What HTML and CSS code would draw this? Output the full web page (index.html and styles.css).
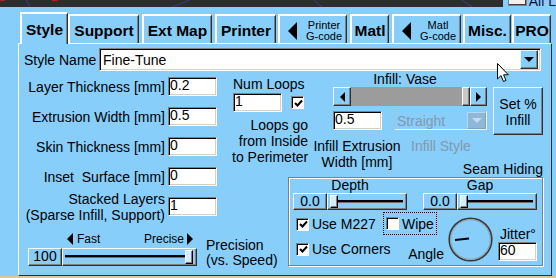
FILE: index.html
```html
<!DOCTYPE html>
<html lang="en">
<head>
  <meta charset="UTF-8">
  <title>Style settings</title>
  <link rel="stylesheet" href="styles.css">
</head>
<body>
  <div class="topbar">
    <div class="view3d">
      <svg width="503" height="7" viewBox="0 0 503 7">
        <line x1="0" y1="1" x2="5" y2="0" stroke="#d02020" stroke-width="1"/>
        <line x1="52" y1="1" x2="58" y2="0" stroke="#d02020" stroke-width="1"/>
        <line x1="26" y1="0" x2="30" y2="7" stroke="#3c3c96" stroke-width="1"/>
        <line x1="172" y1="7" x2="190" y2="0" stroke="#3c3c96" stroke-width="1"/>
        <line x1="314" y1="0" x2="322" y2="7" stroke="#3c3c96" stroke-width="1"/>
        <line x1="462" y1="0" x2="472" y2="7" stroke="#3c3c96" stroke-width="1"/>
      </svg>
    </div>
    <span class="allbox"></span>
    <span class="alltext">All L</span>
  </div>

  <div class="tabs">
    <div class="tab tab-style active">Style</div>
    <div class="tab tab-support">Support</div>
    <div class="tab tab-ext">Ext Map</div>
    <div class="tab tab-printer">Printer</div>
    <div class="tab tab-small"><span class="tri-tab"></span><span class="small-label">Printer<br>G-code</span></div>
    <div class="tab tab-matl">Matl</div>
    <div class="tab tab-small tab-mg"><span class="tri-tab"></span><span class="small-label">Matl<br>G-code</span></div>
    <div class="tab tab-misc">Misc.</div>
    <div class="tab tab-pro">PRO</div>
  </div>

  <div class="panel">
    <div class="name-row">
      <span class="name-label">Style Name</span>
      <div class="combo name-combo">
        <span class="combo-text">Fine-Tune</span>
        <span class="drop"><span class="arrow-down"></span></span>
      </div>
    </div>

    <div class="main">
      <div class="left-col">
        <div class="form-grid">
          <span class="lbl">Layer Thickness [mm]</span><span class="field">0.2</span>
          <span class="lbl">Extrusion Width [mm]</span><span class="field">0.5</span>
          <span class="lbl">Skin Thickness [mm]</span><span class="field">0</span>
          <span class="lbl">Inset&nbsp; Surface [mm]</span><span class="field">0</span>
          <span class="lbl">Stacked Layers<br>(Sparse Infill, Support)</span><span class="field">1</span>
        </div>

        <div class="precision">
          <div class="prec-slider">
            <div class="scale">
              <span><i class="tri-l"></i>Fast</span>
              <span>Precise<i class="tri-r"></i></span>
            </div>
            <div class="slider slider-wide">
              <span class="val">100</span>
              <span class="track"><span class="groove"></span><span class="thumb"></span></span>
            </div>
          </div>
          <div class="prec-label">Precision<br>(vs. Speed)</div>
        </div>
      </div>

      <div class="right-col">
        <div class="upper">
          <div class="loops">
            <div class="loops-title">Num Loops</div>
            <div class="loops-row">
              <span class="field loops-field">1</span>
              <span class="cb checked"><svg width="9" height="9" viewBox="0 0 9 9"><path d="M1 4 L3.5 6.5 L8 1.5" fill="none" stroke="#000" stroke-width="2"/></svg></span>
            </div>
            <div class="loops-text">Loops go<br>from Inside<br>to Perimeter</div>
          </div>

          <div class="infill">
            <div class="infill-title">Infill: Vase</div>
            <div class="scrollbar">
              <span class="sb-btn"><i class="sb-l"></i></span>
              <span class="sb-track"></span>
              <span class="sb-thumb"></span>
              <span class="sb-btn"><i class="sb-r"></i></span>
            </div>
            <div class="infill-row">
              <span class="field">0.5</span>
              <div class="combo style-combo">
                <span class="combo-text">Straight</span>
                <span class="drop"><span class="arrow-down"></span></span>
              </div>
            </div>
            <div class="infill-labels">
              <span class="ie-label">Infill Extrusion<br>Width [mm]</span>
              <span class="is-label">Infill Style</span>
            </div>
          </div>

          <div class="set-btn">Set %<br>Infill</div>
        </div>

        <div class="seam-title">Seam Hiding</div>
        <div class="seam">
          <div class="seam-sliders">
            <div class="seam-col">
              <div class="seam-lbl">Depth</div>
              <div class="slider">
                <span class="val">0.0</span>
                <span class="track"><span class="groove"></span><span class="thumb"></span></span>
              </div>
            </div>
            <div class="seam-col">
              <div class="seam-lbl">Gap</div>
              <div class="slider">
                <span class="val">0.0</span>
                <span class="track"><span class="groove"></span><span class="thumb"></span></span>
              </div>
            </div>
          </div>

          <div class="seam-grid">
            <label class="check m227"><span class="cb checked"><svg width="9" height="9" viewBox="0 0 9 9"><path d="M1 4 L3.5 6.5 L8 1.5" fill="none" stroke="#000" stroke-width="2"/></svg></span>Use M227</label>
            <label class="check wipe"><span class="cb"></span>Wipe</label>
            <label class="check corners"><span class="cb checked"><svg width="9" height="9" viewBox="0 0 9 9"><path d="M1 4 L3.5 6.5 L8 1.5" fill="none" stroke="#000" stroke-width="2"/></svg></span>Use Corners</label>
            <span class="angle">Angle</span>
            <div class="dial">
              <svg width="45" height="45" viewBox="0 0 45 45">
                <circle cx="22.5" cy="22.5" r="21.3" fill="none" stroke="#3a3a3a" stroke-width="1.6"/>
                <circle cx="22.5" cy="22.5" r="19.8" fill="none" stroke="#9a9a9a" stroke-width="1"/>
                <line x1="7" y1="23" x2="21" y2="21.5" stroke="#000" stroke-width="2"/>
              </svg>
            </div>
            <div class="jitter">
              <span class="jitter-lbl">Jitter°</span>
              <span class="field jitter-field">60</span>
            </div>
          </div>
        </div>
      </div>
    </div>
  </div>
  <div class="status"></div>

  <div class="cursor">
    <svg width="13" height="20" viewBox="0 0 13 20">
      <path d="M0.5 0.5 L0.5 16 L4 12.6 L6.5 18.5 L9 17.4 L6.6 11.8 L11.3 11.8 Z" fill="#fff" stroke="#000" stroke-width="1"/>
    </svg>
  </div>
</body>
</html>
```

FILE: styles.css
```css
body {
  margin: 0;
  width: 556px;
  height: 278px;
  overflow: hidden;
  position: relative;
  background: #87cefa;
  font-family: "Liberation Sans", Arial, sans-serif;
  font-size: 14px;
  line-height: 16px;
  color: #000;
}

/* strip of the 3d view above the page control */
.topbar {
  display: flex;
  height: 7px;
}
.view3d {
  width: 503px;
  height: 7px;
  background: #2d2d2d;
}
.view3d svg {
  display: block;
}
.allbox {
  box-sizing: border-box;
  width: 20px;
  height: 6px;
  margin-left: 5px;
  background: #f0f0f0;
  border: 1px solid #808080;
  border-top: none;
  box-shadow: inset -1px -1px #404040;
}
.alltext {
  margin-left: 2px;
  margin-top: -6px;
  line-height: 14px;
  color: #101048;
  white-space: nowrap;
}

/* tabs */
.tabs {
  display: flex;
  align-items: flex-end;
  height: 36px;
  padding-left: 20px;
}
.tab {
  box-sizing: border-box;
  height: 29px;
  margin-right: 3px;
  display: flex;
  align-items: center;
  justify-content: center;
  font-weight: bold;
  font-size: 15.5px;
  padding-top: 2px;
  border-left: 2px solid #fff;
  border-top: 2px solid #fff;
  border-right: 1px solid #303030;
  box-shadow: inset -1px 0 #808080;
  white-space: nowrap;
}
.tab.active {
  height: 32px;
  margin-bottom: -1px;
  margin-right: 0;
  z-index: 1;
  background: #87cefa;
  padding-bottom: 1px;
}
.tab-style { width: 48px; }
.tab-support { width: 71px; }
.tab-ext { width: 70px; }
.tab-printer { width: 61px; margin-right: 2px; }
.tab-small {
  width: 69px;
  justify-content: flex-start;
  padding-left: 8px;
}
.tab-matl { width: 39px; }
.tab-mg { margin-right: 2px; }
.tab-misc { width: 48px; margin-right: 1px; }
.tab-pro { width: 39px; margin-right: 0; }
.tri-tab {
  flex: none;
  width: 0;
  height: 0;
  border-right: 9px solid #000;
  border-top: 9.5px solid transparent;
  border-bottom: 9.5px solid transparent;
}
.small-label {
  width: 38px;
  margin-left: 8px;
  text-align: center;
  font-weight: normal;
  font-size: 11px;
  line-height: 11px;
}

/* main panel */
.panel {
  box-sizing: border-box;
  margin-left: 18px;
  width: 534px;
  height: 233px;
  border: 1px solid;
  border-color: #fff #303030 #303030 #fff;
}
.status {
  height: 2px;
  background: #d8c89c;
}

.name-row {
  display: flex;
  align-items: center;
  padding: 4px 0 0 5px;
}
.name-label {
  width: 75px;
}

.field {
  box-sizing: border-box;
  display: block;
  width: 49px;
  height: 19px;
  padding-left: 1px;
  line-height: 15px;
  background: #fff;
  border: 1px solid;
  border-color: #808080 #fff #fff #808080;
  box-shadow: inset 1px 1px #000, inset -1px -1px #d4d0c8;
  white-space: nowrap;
}

.combo {
  box-sizing: border-box;
  display: flex;
  align-items: center;
  border: 1px solid;
  border-color: #808080 #fff #fff #808080;
  box-shadow: inset 1px 1px #000, inset -1px -1px #d4d0c8;
  padding: 2px;
}
.name-combo {
  width: 442px;
  height: 23px;
  background: #fff;
}
.combo-text {
  flex: 1;
  padding-left: 1px;
}
.drop {
  box-sizing: border-box;
  width: 18px;
  height: 19px;
  display: flex;
  align-items: center;
  justify-content: center;
  background: #87cefa;
  border: 1px solid;
  border-color: #e8f6ff #303030 #303030 #e8f6ff;
  box-shadow: inset -1px -1px #808080;
}
.arrow-down {
  width: 0;
  height: 0;
  border-top: 5px solid #000;
  border-left: 5px solid transparent;
  border-right: 5px solid transparent;
}

.main {
  display: flex;
}

/* left column */
.left-col {
  width: 203px;
  padding-top: 6px;
}
.form-grid {
  display: grid;
  grid-template-columns: 146px 49px;
  grid-auto-rows: 19px;
  column-gap: 3px;
  row-gap: 11px;
  align-items: center;
}
.lbl {
  text-align: right;
  white-space: nowrap;
}

.precision {
  display: flex;
  margin-top: 16px;
}
.prec-slider {
  margin-left: 9px;
  width: 169px;
}
.scale {
  display: flex;
  justify-content: space-between;
  padding: 0 4px 0 39px;
  font-size: 12px;
  line-height: 14px;
}
.scale span {
  display: flex;
  align-items: center;
}
.tri-l, .tri-r {
  width: 0;
  height: 0;
  border-top: 6px solid transparent;
  border-bottom: 6px solid transparent;
}
.tri-l {
  border-right: 6px solid #000;
  margin-right: 4px;
}
.tri-r {
  border-left: 6px solid #000;
  margin-left: 3px;
}
.prec-label {
  margin-left: 9px;
  margin-top: 6px;
  line-height: 15px;
  white-space: nowrap;
}

/* trackbars */
.slider {
  display: flex;
  height: 17px;
}
.slider-wide {
  height: 18px;
  margin-top: 2px;
}
.val, .track, .set-btn, .sb-btn, .sb-thumb {
  box-sizing: border-box;
  border: 1px solid;
  border-color: #f4fbff #303030 #303030 #f4fbff;
  box-shadow: inset -1px -1px #808080;
}
.val {
  width: 34px;
  text-align: center;
  line-height: 15px;
}
.track {
  position: relative;
  width: 80px;
}
.slider-wide .track {
  width: 135px;
}
.groove {
  position: absolute;
  left: 2px;
  right: 3px;
  top: 6px;
  height: 2px;
  background: #000;
  box-shadow: 0 1px #707070;
}
.thumb {
  position: absolute;
  top: 1px;
  left: 2px;
  box-sizing: border-box;
  width: 8px;
  height: 13px;
  background: #d4ecfb;
  border: 1px solid;
  border-color: #fff #000 #000 #fff;
  box-shadow: inset -1px -1px #808080;
}
.slider-wide .thumb {
  left: auto;
  right: 3px;
  height: 14px;
}

/* right side */
.right-col {
  flex: 1;
}
.upper {
  display: flex;
  height: 90px;
}
.loops {
  width: 76px;
  margin-left: 10px;
  padding-top: 5px;
}
.loops-title {
  padding-left: 1px;
  white-space: nowrap;
}
.loops-row {
  display: flex;
  align-items: center;
  margin-top: 1px;
}
.loops-field {
  margin-left: 1px;
}
.loops-row .cb {
  margin-left: 9px;
}
.loops-text {
  margin-top: 5px;
  text-align: right;
  white-space: nowrap;
}

.cb {
  box-sizing: border-box;
  display: inline-flex;
  align-items: center;
  justify-content: center;
  width: 13px;
  height: 13px;
  flex: none;
  background: #fff;
  border: 1px solid;
  border-color: #808080 #fff #fff #808080;
  box-shadow: inset 1px 1px #000;
}
.cb svg {
  display: block;
  margin: 1px 0 0 1px;
}

.infill {
  width: 154px;
  margin-left: 25px;
}
.infill-title {
  text-align: center;
  padding-right: 10px;
  white-space: nowrap;
}
.scrollbar {
  display: flex;
  height: 19px;
}
.sb-btn {
  width: 18px;
  display: flex;
  align-items: center;
  justify-content: center;
  background: #87cefa;
}
.sb-btn:last-child {
  width: 17px;
}
.sb-l, .sb-r {
  width: 0;
  height: 0;
  border-top: 5px solid transparent;
  border-bottom: 5px solid transparent;
}
.sb-l {
  border-right: 5px solid #000;
}
.sb-r {
  border-left: 5px solid #000;
}
.sb-track {
  flex: 1;
  background: #9c9c9c;
}
.sb-thumb {
  width: 8px;
  background: #c8c8c8;
}
.infill-row {
  display: flex;
  margin-top: 5px;
}
.style-combo {
  width: 93px;
  height: 19px;
  margin-left: 12px;
  padding: 0 0 0 1px;
  color: #8499ad;
  border-color: #a6c2d6 #e6f4fd #e6f4fd #a6c2d6;
  box-shadow: none;
}
.style-combo .drop {
  width: 19px;
  height: 17px;
  background: #90b8d6;
  border-color: #b8d8ee #7fa3bf #7fa3bf #b8d8ee;
  box-shadow: none;
}
.style-combo .arrow-down {
  border-top-color: #c6dcee;
}
.infill-labels {
  display: flex;
  margin-top: 8px;
  margin-left: -24px;
  white-space: nowrap;
}
.ie-label {
  width: 96px;
  text-align: center;
}
.is-label {
  margin-left: 6px;
  color: #8499ad;
}

.set-btn {
  width: 50px;
  height: 48px;
  margin-left: 6px;
  margin-top: 16px;
  padding-top: 8px;
  text-align: center;
}

/* seam hiding */
.seam-title {
  text-align: right;
  padding-right: 8px;
}
.seam {
  box-sizing: border-box;
  margin-left: 66px;
  width: 255px;
  height: 89px;
  border: 1px solid #808080;
  box-shadow: inset 1px 1px #fff, 1px 1px #fff;
}
.seam-sliders {
  display: flex;
  gap: 16px;
  padding-left: 4px;
}
.seam-col {
  width: 114px;
}
.seam-lbl {
  text-align: center;
  line-height: 15px;
}
.seam-grid {
  display: grid;
  grid-template-columns: 94px 63px 47px 44px;
  grid-template-rows: 24px 26px;
  margin-top: 2px;
}
.check {
  display: flex;
  align-items: center;
  white-space: nowrap;
}
.check .cb {
  margin-right: 3px;
}
.m227, .corners {
  padding-left: 7px;
}
.m227 { grid-area: 1 / 1; }
.corners { grid-area: 2 / 1; }
.wipe {
  grid-area: 1 / 2;
  box-sizing: border-box;
  width: 54px;
  height: 23px;
  padding-left: 2px;
  border: 1px dotted #000;
}
.angle {
  grid-area: 2 / 2;
  align-self: end;
  text-align: right;
  padding-right: 2px;
}
.dial {
  grid-column: 3;
  grid-row: 1 / 3;
  align-self: end;
  margin-left: 2px;
  height: 45px;
}
.dial svg {
  display: block;
}
.jitter {
  grid-column: 4;
  grid-row: 1 / 3;
  display: flex;
  flex-direction: column;
  justify-content: flex-end;
  margin-left: 5px;
  padding-bottom: 1px;
}
.jitter-lbl {
  padding-left: 2px;
}
.jitter-field {
  width: 39px;
}

.cursor {
  position: absolute;
  left: 497px;
  top: 63px;
}
.cursor svg {
  display: block;
}
```
